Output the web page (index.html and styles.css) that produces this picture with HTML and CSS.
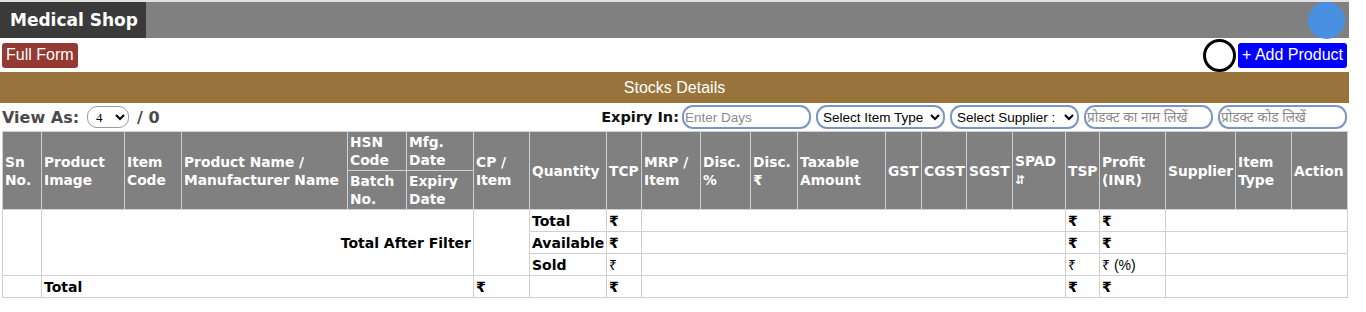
FILE: index.html
```html
<!DOCTYPE html>
<html lang="en">
<head>
  <meta charset="UTF-8">
  <title>Medical Shop - Stocks</title>
  <link rel="stylesheet" href="styles.css">
</head>
<body>
  <div class="page">
    <div class="topbar">
      <div class="brand">Medical Shop</div>
      <div class="avatar"></div>
    </div>
    <div class="actions">
      <button class="btn btn-form">Full Form</button>
      <div class="actions-right">
        <span class="ring"></span>
        <button class="btn btn-add">+ Add Product</button>
      </div>
    </div>
    <div class="section-title">Stocks Details</div>
    <div class="filters">
      <div class="view-as">
        View As:
        <select class="view-select"><option>4</option></select>
        / 0
      </div>
      <div class="filter-right">
        <label class="expiry">Expiry In:</label>
        <input class="pill" type="text" placeholder="Enter Days">
        <select class="pill"><option>Select Item Type</option></select>
        <select class="pill"><option>Select Supplier :</option></select>
        <input class="pill" type="text" placeholder="प्रोडक्ट का नाम लिखें">
        <input class="pill" type="text" placeholder="प्रोडक्ट कोड लिखें">
      </div>
    </div>
    <table class="stock">
      <colgroup>
        <col style="width:39px"><col style="width:83px"><col style="width:57px"><col style="width:166px">
        <col style="width:59px"><col style="width:67px"><col style="width:56px"><col style="width:77px">
        <col style="width:35px"><col style="width:59px"><col style="width:50px"><col style="width:47px">
        <col style="width:88px"><col style="width:36px"><col style="width:45px"><col style="width:46px">
        <col style="width:53px"><col style="width:34px"><col style="width:66px"><col style="width:70px">
        <col style="width:56px"><col style="width:56px">
      </colgroup>
      <thead>
        <tr>
          <th rowspan="2">Sn No.</th>
          <th rowspan="2">Product Image</th>
          <th rowspan="2">Item Code</th>
          <th rowspan="2">Product Name / Manufacturer Name</th>
          <th>HSN Code</th>
          <th>Mfg. Date</th>
          <th rowspan="2">CP / Item</th>
          <th rowspan="2">Quantity</th>
          <th rowspan="2">TCP</th>
          <th rowspan="2">MRP / Item</th>
          <th rowspan="2">Disc. %</th>
          <th rowspan="2">Disc. ₹</th>
          <th rowspan="2">Taxable Amount</th>
          <th rowspan="2">GST</th>
          <th rowspan="2">CGST</th>
          <th rowspan="2">SGST</th>
          <th rowspan="2">SPAD<br><span class="sort">⇵</span></th>
          <th rowspan="2">TSP</th>
          <th rowspan="2">Profit (INR)</th>
          <th rowspan="2">Supplier</th>
          <th rowspan="2">Item Type</th>
          <th rowspan="2">Action</th>
        </tr>
        <tr>
          <th>Batch No.</th>
          <th>Expiry Date</th>
        </tr>
      </thead>
      <tbody>
        <tr>
          <td rowspan="3"></td>
          <td rowspan="3" colspan="5" class="right">Total After Filter</td>
          <td rowspan="3"></td>
          <td>Total</td>
          <td>₹</td>
          <td colspan="8"></td>
          <td>₹</td>
          <td>₹</td>
          <td colspan="3"></td>
        </tr>
        <tr>
          <td>Available</td>
          <td>₹</td>
          <td colspan="8"></td>
          <td>₹</td>
          <td>₹</td>
          <td colspan="3"></td>
        </tr>
        <tr>
          <td>Sold</td>
          <td class="thin">₹</td>
          <td colspan="8"></td>
          <td class="thin">₹</td>
          <td class="thin">₹ (%)</td>
          <td colspan="3"></td>
        </tr>
        <tr>
          <td></td>
          <td colspan="5">Total</td>
          <td>₹</td>
          <td></td>
          <td>₹</td>
          <td colspan="8"></td>
          <td>₹</td>
          <td>₹</td>
          <td colspan="3"></td>
        </tr>
      </tbody>
    </table>
  </div>
</body>
</html>
```

FILE: styles.css
```css
* {
  margin: 0;
  padding: 0;
  box-sizing: border-box;
}
body {
  background: #fff;
  font-family: "Liberation Sans", Arial, sans-serif;
}
.page {
  width: 1349px;
  border-top: 2px solid #e2e2e2;
}
.topbar {
  height: 36px;
  background: #808080;
  display: flex;
  justify-content: space-between;
  align-items: center;
}
.brand {
  height: 100%;
  width: 146px;
  padding-left: 10px;
  background: #3a3a3a;
  color: #fff;
  font-family: "DejaVu Sans", Verdana, sans-serif;
  font-weight: bold;
  font-size: 17px;
  line-height: 36px;
  white-space: nowrap;
}
.avatar {
  width: 37px;
  height: 37px;
  margin-right: 4px;
  border-radius: 50%;
  background: #4a90e2;
}
.actions {
  height: 34px;
  padding: 0 2px;
  display: flex;
  justify-content: space-between;
  align-items: center;
}
.actions-right {
  display: flex;
  align-items: center;
  gap: 2px;
}
.ring {
  width: 33px;
  height: 33px;
  border: 3px solid #000;
  border-radius: 50%;
}
.btn {
  border: none;
  border-radius: 3px;
  color: #fff;
  font-family: "Liberation Sans", Arial, sans-serif;
  font-size: 16px;
  height: 25px;
  padding: 0 4px;
  white-space: nowrap;
}
.btn-form {
  background: #943a32;
}
.btn-add {
  background: #0000ff;
  width: 109px;
}
.section-title {
  height: 31px;
  background: #98743c;
  color: #fff;
  text-align: center;
  font-size: 16px;
  line-height: 31px;
}
.filters {
  height: 28px;
  padding: 0 2px;
  display: flex;
  justify-content: space-between;
  align-items: center;
}
.view-as {
  font-family: "DejaVu Sans", Verdana, sans-serif;
  font-weight: bold;
  font-size: 16px;
  color: #4a4a4a;
  display: flex;
  align-items: center;
  gap: 8px;
}
.view-select {
  width: 42px;
  height: 22px;
  border: 1px solid #9a9a9a;
  border-radius: 10px;
  font-family: "Liberation Serif", serif;
  font-size: 13px;
  padding-left: 4px;
  background: #fff;
}
.filter-right {
  display: flex;
  align-items: center;
  gap: 5px;
}
.expiry {
  font-family: "DejaVu Sans", Verdana, sans-serif;
  font-weight: bold;
  font-size: 14.5px;
  color: #111;
  margin-right: -2px;
}
.pill {
  width: 129px;
  height: 24px;
  border: 2px solid #7b96c2;
  border-radius: 11px;
  background: #fff;
  padding: 0 1px;
  font-family: "Liberation Sans", Arial, "Noto Sans", sans-serif;
  font-size: 13.5px;
  color: #000;
}
.pill::placeholder {
  color: #8a8a8a;
}
.stock {
  margin-left: 2px;
  width: 1345px;
  table-layout: fixed;
  border-collapse: collapse;
  font-family: "DejaVu Sans", Verdana, sans-serif;
  font-size: 14px;
  text-align: left;
}
.stock th {
  background: #808080;
  color: #fff;
  border: 1px solid #d0d0d0;
  height: 39px;
  padding: 0 2px;
  font-size: 13.8px;
  line-height: 18px;
  font-weight: bold;
  vertical-align: middle;
  overflow: hidden;
}
.stock th .sort {
  font-size: 12px;
}
.stock td {
  border: 1px solid #d0d0d0;
  height: 22px;
  padding: 0 2px;
  font-weight: bold;
  color: #000;
}
.stock td.right {
  text-align: right;
}
.stock td.thin {
  font-weight: normal;
  font-family: "Liberation Sans", Arial, sans-serif;
}
```
